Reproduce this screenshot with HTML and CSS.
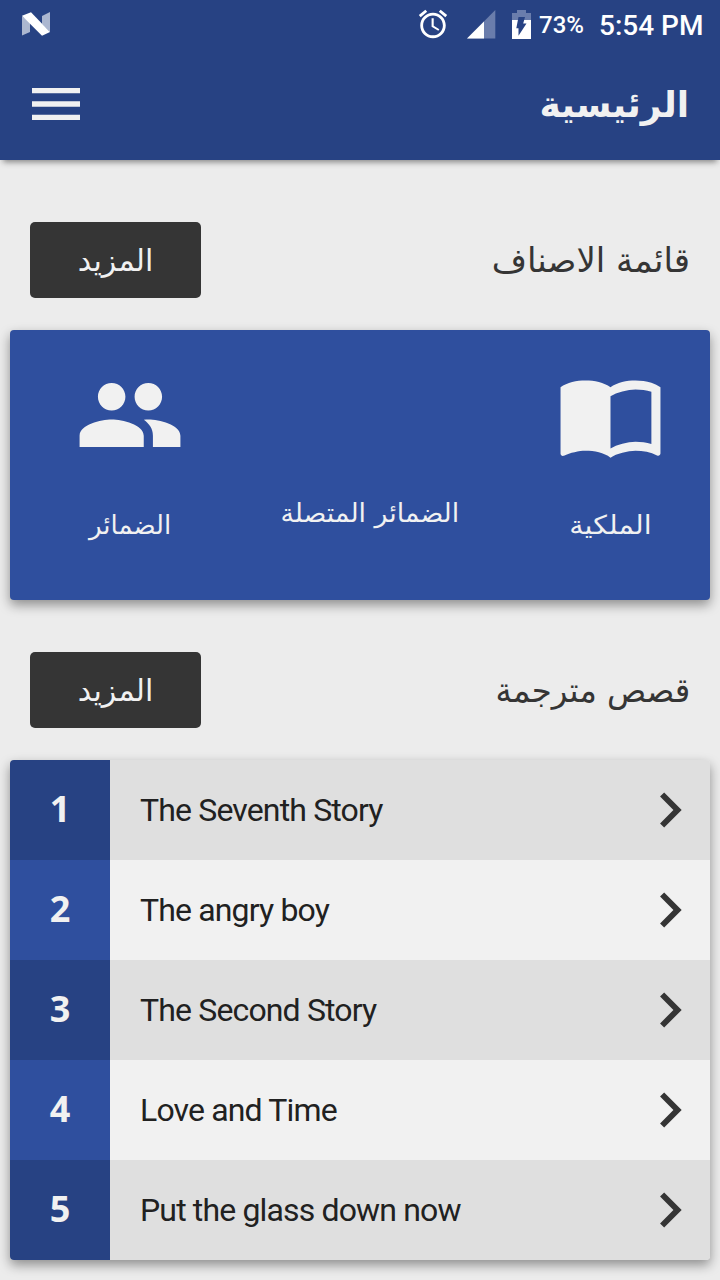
FILE: index.html
```html
<!DOCTYPE html>
<html lang="ar">

<head>
	<meta charset="utf-8">
	<title>الرئيسية</title>
	<link rel="stylesheet" href="styles.css">
</head>

<body>

<!-- device status bar -->
<div class="statusBar">
	<svg class="iconN" width="28" height="24" viewBox="0 0 28 24">
		<path fill="#fff" fill-opacity=".62" d="M0 4L8 10V20L0 23.5ZM20 4L28 0V20L20 12Z" />
		<path fill="#fff" d="M0 3.8L9 .3L28 20L20 23.7Z" />
	</svg>
	<div class="statusRight">
		<svg class="iconAlarm" width="34" height="34" viewBox="0 0 24 24">
			<path fill="#fff" d="M22 5.72l-4.6-3.86-1.29 1.53 4.6 3.86L22 5.72zM7.88 3.39L6.6 1.86 2 5.71l1.29 1.53 4.59-3.85zM12.5 8H11v6l4.75 2.85.75-1.23-4-2.37V8zM12 4c-4.97 0-9 4.03-9 9s4.02 9 9 9c4.97 0 9-4.03 9-9s-4.03-9-9-9zm0 16c-3.87 0-7-3.13-7-7s3.13-7 7-7 7 3.13 7 7-3.13 7-7 7z" />
		</svg>
		<svg class="iconSignal" width="29" height="29" viewBox="0 0 29 29">
			<path fill="#6a7dac" d="M28.3 0V28.5H0Z" />
			<path fill="#fff" d="M17 11.5V28.5H0Z" />
		</svg>
		<svg class="iconBattery" width="19" height="29" viewBox="0 0 19 29">
			<path fill="#6a7dac" d="M5 0H14V3H19V10H0V3H5Z" />
			<path fill="#fff" d="M0 10H19V29H0Z" />
			<path fill="#274283" d="M6.5 7H13L11.2 13.5H14.5L6.5 25.7V18.2H4.3Z" />
		</svg>
		<span class="batteryText">73%</span>
		<span class="timeText">5:54 PM</span>
	</div>
</div>

<!-- toolbar -->
<div class="toolbar">
	<svg width="64" height="64" viewBox="0 0 24 24">
		<path fill="#f1f1f1" d="M3 18h18v-2H3v2zm0-5h18v-2H3v2zm0-7v2h18V6H3z" />
	</svg>
	<h1 class="pageTitle arabic">الرئيسية</h1>
</div>

<!-- categories -->
<div class="section">
	<div class="sectionHeader">
		<a class="moreButton arabic"><span>المزيد</span></a>
		<h2 class="sectionTitle arabic">قائمة الاصناف</h2>
	</div>
	<div class="card categories">
		<div class="category">
			<svg width="110" height="110" viewBox="0 0 24 24">
				<path fill="#f1f1f1" d="M16 11c1.66 0 3-1.34 3-3s-1.34-3-3-3-3 1.34-3 3 1.34 3 3 3zm-8 0c1.66 0 3-1.34 3-3S9.66 5 8 5 5 6.34 5 8s1.34 3 3 3zm0 2c-2.33 0-7 1.17-7 3.5V19h14v-2.5c0-2.33-4.67-3.5-7-3.5zm8 0c-.29 0-.62.02-.97.05 1.16.84 1.97 1.97 1.97 3.45V19h6v-2.5c0-2.33-4.67-3.5-7-3.5z" />
			</svg>
			<span class="categoryName arabic">الضمائر</span>
		</div>
		<div class="category noIcon">
			<span class="categoryName arabic">الضمائر المتصلة</span>
		</div>
		<div class="category">
			<svg class="iconBook" width="109" height="109" viewBox="0 0 24 24">
				<path fill="#f1f1f1" d="M21 5c-1.11-.35-2.33-.5-3.5-.5-1.95 0-4.05.4-5.5 1.5-1.45-1.1-3.55-1.5-5.5-1.5S2.45 4.9 1 6v14.65c0 .25.25.5.5.5.1 0 .15-.05.25-.05C3.1 20.45 5.05 20 6.5 20c1.95 0 4.05.4 5.5 1.5 1.35-.85 3.8-1.5 5.5-1.5 1.65 0 3.35.3 4.75 1.05.1.05.15.05.25.05.25 0 .5-.25.5-.5V6c-.6-.45-1.25-.75-2-1zm0 13.5c-1.1-.35-2.3-.5-3.5-.5-1.7 0-4.15.65-5.5 1.5V8c1.35-.85 3.8-1.5 5.5-1.5 1.2 0 2.4.15 3.5.5v11.5z" />
			</svg>
			<span class="categoryName wide arabic">الملكية</span>
		</div>
	</div>
</div>

<!-- translated stories -->
<div class="section">
	<div class="sectionHeader">
		<a class="moreButton arabic"><span>المزيد</span></a>
		<h2 class="sectionTitle stories arabic">قصص مترجمة</h2>
	</div>
	<div class="card">
		<div class="story">
			<div class="storyNumber">1</div>
			<div class="storyTitle">The Seventh Story</div>
			<svg width="70" height="70" viewBox="0 0 24 24"><path fill="#353535" d="M8.59 16.59L13.17 12 8.59 7.41 10 6l6 6-6 6z" /></svg>
		</div>
		<div class="story">
			<div class="storyNumber">2</div>
			<div class="storyTitle">The angry boy</div>
			<svg width="70" height="70" viewBox="0 0 24 24"><path fill="#353535" d="M8.59 16.59L13.17 12 8.59 7.41 10 6l6 6-6 6z" /></svg>
		</div>
		<div class="story">
			<div class="storyNumber">3</div>
			<div class="storyTitle">The Second Story</div>
			<svg width="70" height="70" viewBox="0 0 24 24"><path fill="#353535" d="M8.59 16.59L13.17 12 8.59 7.41 10 6l6 6-6 6z" /></svg>
		</div>
		<div class="story">
			<div class="storyNumber">4</div>
			<div class="storyTitle">Love and Time</div>
			<svg width="70" height="70" viewBox="0 0 24 24"><path fill="#353535" d="M8.59 16.59L13.17 12 8.59 7.41 10 6l6 6-6 6z" /></svg>
		</div>
		<div class="story">
			<div class="storyNumber">5</div>
			<div class="storyTitle">Put the glass down now</div>
			<svg width="70" height="70" viewBox="0 0 24 24"><path fill="#353535" d="M8.59 16.59L13.17 12 8.59 7.41 10 6l6 6-6 6z" /></svg>
		</div>
	</div>
</div>

</body>
</html>
```

FILE: styles.css
```css
*
{
	box-sizing: border-box;
}

body
{
	margin: 0;
	width: 720px;
	height: 1280px;
	overflow: hidden;
	background: #ececec;
	font-family: Roboto, sans-serif;
}

svg
{
	display: block;
	flex: none;
}

.arabic
{
	font-family: "DejaVu Sans", sans-serif;
	direction: rtl;
	white-space: nowrap;
}

.statusBar
{
	height: 48px;
	padding: 0 17px 0 22px;
	display: flex;
	justify-content: space-between;
	align-items: center;
	background: #274283;
	color: #fff;
}

.statusRight
{
	display: flex;
	align-items: center;
}

.iconAlarm
{
	margin-right: 17px;
}

.iconSignal
{
	margin-right: 16px;
}

.batteryText
{
	width: 45px;
	margin: 2px 15px 0 8px;
	font-size: 24px;
	font-weight: 500;
}

.timeText
{
	width: 104px;
	margin-top: 3px;
	font-size: 28px;
	font-weight: 500;
	white-space: nowrap;
}

.toolbar
{
	height: 112px;
	padding: 0 31px 0 24px;
	display: flex;
	justify-content: space-between;
	align-items: center;
	background: #274283;
	/* negative spread keeps the shadow off the status bar */
	box-shadow: 0 5px 6px -3px rgba(0, 0, 0, 0.45);
}

.pageTitle
{
	margin: 0;
	color: #f1f1f1;
	font-size: 36px;
	font-weight: bold;
}

.section
{
	padding: 0 10px;
}

.sectionHeader
{
	height: 160px;
	padding: 20px 20px 0;
	display: flex;
	justify-content: space-between;
	align-items: center;
}

.toolbar + .section .sectionHeader
{
	height: 170px;
	padding-top: 30px;
}

.moreButton
{
	width: 171px;
	height: 76px;
	display: flex;
	justify-content: center;
	align-items: center;
	border-radius: 5px;
	background: #353535;
	color: #f1f1f1;
	font-size: 30px;
}

.sectionTitle
{
	margin: 0;
	color: #353535;
	font-size: 34px;
	font-weight: normal;
}

.sectionTitle.stories
{
	transform: scaleX(0.953);
	transform-origin: right;
}

.card
{
	border-radius: 4px;
	box-shadow: 0 5px 12px rgba(0, 0, 0, 0.4);
	overflow: hidden;
}

.categories
{
	height: 270px;
	display: flex;
	background: #2f4f9e;
}

.category
{
	width: 240px;
	padding-top: 30px;
	display: flex;
	flex-direction: column;
	align-items: center;
	flex: none;
}

.category.noIcon
{
	padding-top: 158px;
}

.iconBook
{
	margin-bottom: 1px;
}

.categoryName
{
	height: 50px;
	margin-top: 30px;
	line-height: 50px;
	color: #f1f1f1;
	font-size: 26px;
}

.categoryName.wide
{
	transform: scaleX(1.1);
}

.noIcon .categoryName
{
	margin-top: 0;
	transform: scaleX(1.03);
}

.story
{
	height: 100px;
	padding-right: 5px;
	display: flex;
	align-items: center;
	background: #f1f1f1;
}

.story:nth-child(odd)
{
	background: #dfdfdf;
}

.storyNumber
{
	width: 100px;
	height: 100px;
	line-height: 98px;
	background: #2f4f9e;
	color: #f1f1f1;
	font-family: "Noto Sans", sans-serif;
	font-size: 36px;
	font-weight: bold;
	text-align: center;
}

.story:nth-child(odd) .storyNumber
{
	background: #274283;
}

.storyTitle
{
	flex: 1;
	padding-left: 30px;
	color: #212121;
	font-size: 32px;
	letter-spacing: -0.85px;
}
```
